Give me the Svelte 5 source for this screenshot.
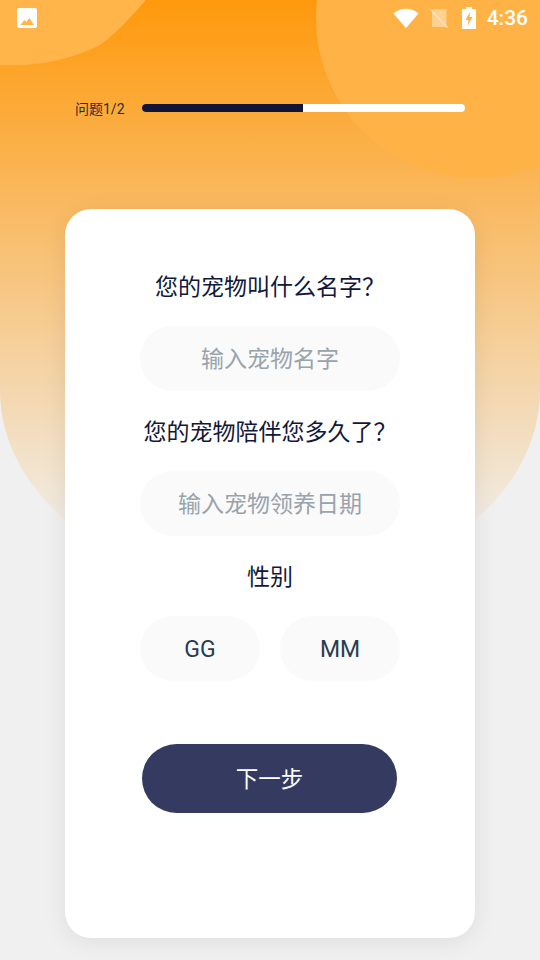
<script>
  let petName = $state("");
  let adoptDate = $state("");
  let gender = $state("");
  const step = 1;
  const total = 2;
  const trackWidth = 323;
  const fillWidth = Math.floor((trackWidth * step) / total);
</script>

<div class="page">
  <div class="header-bg">
    <svg class="blob-left" viewBox="0 0 146 67" width="146" height="67">
      <path fill="#ffb54a" d="M0 0H146C128 20 114 36 98 46 C70 60 35 67 0 65Z" />
    </svg>
    <div class="blob-right"></div>
  </div>

  <div class="status-bar">
    <svg class="pic-icon" viewBox="0 0 20 20" width="20" height="20">
      <path fill="#fff" fill-rule="evenodd" d="M2 0h16a2 2 0 0 1 2 2v16a2 2 0 0 1-2 2H2a2 2 0 0 1-2-2V2a2 2 0 0 1 2-2zM3.500 17h13.500l-4.500-7-3.200 4-2-2z" />
    </svg>
    <div class="status-right">
      <svg viewBox="0 0 26 20" width="26" height="20">
        <path fill="#fff" d="M13 20 0.500 5.500C4 2.500 8.200 0.800 13 0.800s9 1.700 12.500 4.700z" />
      </svg>
      <svg class="sim" viewBox="0 0 20 20" width="20" height="20">
        <path fill="#fff" fill-opacity="0.4" d="M3 2.500C3 1.500 3.500 1 4.500 1H16c1 0 1.500 0.500 1.500 1.500V18.500c0 0.500-0.500 0.500-1 0.500H4c-0.500 0-1-0.500-1-1z" />
        <path stroke="#fff" stroke-opacity="0.4" stroke-width="1.500" d="M1 1l18 19" />
      </svg>
      <svg class="battery" viewBox="0 0 14 22" width="14" height="22">
        <path fill="#fff" fill-rule="evenodd" d="M4 0h6v2h4v20H0V2h4zM8 5 3.500 13H6.500L5.500 19 10.500 10H7.500z" />
      </svg>
      <span class="clock">4:36</span>
    </div>
  </div>

  <div class="progress-row">
    <span class="progress-label">问题{step}/{total}</span>
    <div class="track">
      <div class="fill" style="width: {fillWidth}px"></div>
    </div>
  </div>

  <div class="card">
    <h2>您的宠物叫什么名字？</h2>
    <input type="text" bind:value={petName} placeholder="输入宠物名字" />

    <h2>您的宠物陪伴您多久了？</h2>
    <input type="text" bind:value={adoptDate} placeholder="输入宠物领养日期" />

    <h2>性别</h2>
    <div class="gender-row">
      <button type="button" class="gender-btn" onclick={() => (gender = "GG")}>GG</button>
      <button type="button" class="gender-btn" onclick={() => (gender = "MM")}>MM</button>
    </div>

    <button type="button" class="next-btn">下一步</button>
  </div>
</div>

<style>
  :global(body) {
    margin: 0;
  }

  .page {
    position: relative;
    width: 540px;
    height: 960px;
    overflow: hidden;
    background: #f0f0f0;
    font-family: Roboto, "Noto Sans CJK SC", sans-serif;
  }

  .header-bg {
    position: absolute;
    top: 0;
    left: 0;
    width: 540px;
    height: 590px;
    overflow: hidden;
    border-radius: 0 0 270px 270px / 0 0 200px 200px;
    background: linear-gradient(180deg, #ff990c 0, #f0f0f0 550px);
  }

  .blob-left {
    position: absolute;
    left: 0;
    top: 0;
  }

  .blob-right {
    position: absolute;
    left: 316px;
    top: -142px;
    width: 320px;
    height: 320px;
    border-radius: 50%;
    background: #ffb347;
  }

  .status-bar {
    position: relative;
    height: 36px;
    display: flex;
    align-items: center;
    justify-content: space-between;
    padding: 0 12px 0 17px;
  }

  .status-right {
    display: flex;
    align-items: center;
  }

  .sim {
    margin-left: 10px;
  }

  .battery {
    margin-left: 13px;
  }

  .clock {
    margin-left: 11px;
    font-size: 21px;
    font-weight: 500;
    color: #fff;
  }

  .progress-row {
    position: relative;
    display: flex;
    align-items: center;
    margin-top: 62px;
    padding-left: 75px;
    height: 20px;
  }

  .progress-label {
    width: 67px;
    font-size: 14px;
    color: #2b2b33;
    white-space: nowrap;
  }

  .track {
    width: 323px;
    height: 8px;
    border-radius: 4px;
    overflow: hidden;
    background: #fff;
  }

  .fill {
    height: 100%;
    background: #101636;
  }

  .card {
    position: relative;
    box-sizing: border-box;
    width: 410px;
    height: 729px;
    margin: 91px 0 0 65px;
    padding-top: 37px;
    display: flex;
    flex-direction: column;
    align-items: center;
    background: #fff;
    border-radius: 26px;
    box-shadow: 0 4px 24px rgba(0, 0, 0, 0.08);
  }

  h2 {
    margin: 0;
    height: 80px;
    line-height: 84px;
    font-size: 23px;
    font-weight: 400;
    color: #12183a;
    white-space: nowrap;
  }

  input {
    box-sizing: border-box;
    width: 260px;
    height: 65px;
    flex: none;
    padding: 2px 0 0;
    border: none;
    outline: none;
    border-radius: 33px;
    background: #fafafa;
    text-align: center;
    font: inherit;
    font-size: 23px;
    color: #12183a;
  }

  input::placeholder {
    color: #97a3ad;
    opacity: 1;
  }

  .gender-row {
    display: flex;
    gap: 20px;
  }

  button {
    border: none;
    cursor: pointer;
    font: inherit;
  }

  .gender-btn {
    width: 120px;
    height: 65px;
    padding: 2px 0 0;
    border-radius: 33px;
    background: #fafafa;
    font-size: 23px;
    color: #2a3c4f;
  }

  .next-btn {
    width: 255px;
    height: 69px;
    margin: 63px 1px 0 0;
    padding: 0 0 3px;
    border-radius: 35px;
    background: #353b60;
    font-size: 22.500px;
    color: #fff;
  }
</style>
